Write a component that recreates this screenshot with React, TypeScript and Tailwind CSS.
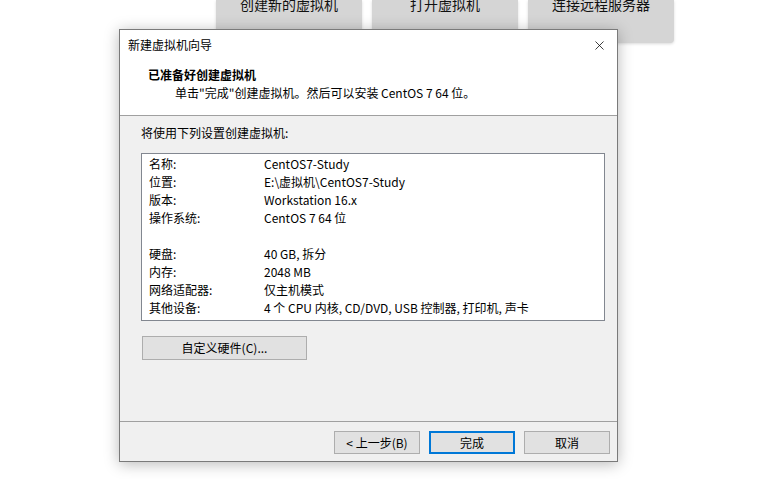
import { X } from "lucide-react"

const rows: [string, string][] = [
    ["名称:", "CentOS7-Study"],
    ["位置:", "E:\\虚拟机\\CentOS7-Study"],
    ["版本:", "Workstation 16.x"],
    ["操作系统:", "CentOS 7 64 位"],
    ["", ""],
    ["硬盘:", "40 GB, 拆分"],
    ["内存:", "2048 MB"],
    ["网络适配器:", "仅主机模式"],
    ["其他设备:", "4 个 CPU 内核, CD/DVD, USB 控制器, 打印机, 声卡"],
]

function HomeCard({ label }: { label: string }) {
    return (
        <div className="w-[146px] h-[43px] bg-[#d5d5d5] rounded-b-[4px] shadow-[0_1px_3px_rgba(0,0,0,0.15)] flex justify-center">
            <span className="text-[14px] leading-[14px] -mt-[3px] text-[#111]">{label}</span>
        </div>
    )
}

export default function App() {
    return (
        <div className="relative w-[771px] h-[479px] bg-white overflow-hidden font-['Noto_Sans_CJK_SC','Liberation_Sans',sans-serif] text-[12px] text-black">
            <div className="flex gap-[10px] pl-[216px]">
                <HomeCard label="创建新的虚拟机" />
                <HomeCard label="打开虚拟机" />
                <HomeCard label="连接远程服务器" />
            </div>

            <div className="absolute left-[119px] top-[29px] w-[499px] h-[433px] border border-[#7a7a7a] bg-[#f0f0f0] shadow-[0_2px_14px_rgba(0,0,0,0.28)] flex flex-col">
                <div className="bg-white">
                    <div className="h-[30px] flex items-center justify-between pl-[8px] pr-[10px]">
                        <span className="leading-none">新建虚拟机向导</span>
                        <X size={15} strokeWidth={1.2} className="text-black" />
                    </div>
                    <div className="h-[55px] pl-[28px] pt-[6px]">
                        <div className="font-bold leading-[18px]">已准备好创建虚拟机</div>
                        <div className="pl-[27px] leading-[18px]">单击"完成"创建虚拟机。然后可以安装 CentOS 7 64 位。</div>
                    </div>
                </div>
                <div className="h-px bg-[#a0a0a0]" />

                <div className="flex-1 px-[21px] pt-[9px]">
                    <div className="leading-[16px]">将使用下列设置创建虚拟机:</div>
                    <div className="mt-[12px] w-[464px] h-[168px] border border-[#828790] bg-white pt-[1px] pl-[7px]">
                        {rows.map(([k, v], i) => (
                            <div key={i} className="flex h-[18px] items-center leading-none">
                                <span className="w-[115px]">{k}</span>
                                <span>{v}</span>
                            </div>
                        ))}
                    </div>
                    <button className="mt-[15px] ml-px w-[165px] h-[24px] bg-[#e1e1e1] border border-[#adadad] leading-none">
                        自定义硬件(C)...
                    </button>
                </div>

                <div className="h-px bg-[#a0a0a0]" />
                <div className="h-[39px] flex justify-end items-start pt-[9px] pr-[7px] gap-[9px]">
                    <button className="w-[86px] h-[23px] bg-[#e1e1e1] border border-[#adadad] leading-none">&lt; 上一步(B)</button>
                    <button className="w-[86px] h-[23px] bg-[#e1e1e1] border-2 border-[#0078d7] leading-none">完成</button>
                    <button className="w-[86px] h-[23px] bg-[#e1e1e1] border border-[#adadad] leading-none">取消</button>
                </div>
            </div>
        </div>
    )
}
